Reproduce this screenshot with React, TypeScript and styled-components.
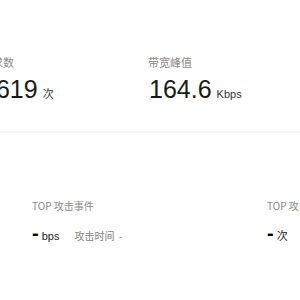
import React from 'react'
import styled, {createGlobalStyle} from 'styled-components'

const GlobalStyle = createGlobalStyle`
    body {
        margin: 0;
        background: #fefefe;
        font-family: 'Liberation Sans', 'Noto Sans CJK SC', sans-serif;
        overflow: hidden;
    }
`

const Page = styled.div`
    width: 300px;
    height: 300px;
    overflow: hidden;
`

const Summary = styled.section`
    display: flex;
    height: 133px;
    box-sizing: border-box;
    padding-top: 55px;
    margin-left: -19px;
    background: #fff;
    border-bottom: 2px solid #f2f3f6;
`

const Stat = styled.div`
    width: 167px;
    flex-shrink: 0;
`

const Label = styled.div`
    font-family: 'Noto Sans CJK SC', 'Liberation Sans', sans-serif;
    font-size: 11px;
    line-height: 14px;
    color: #8a8a8a;
    white-space: nowrap;
`

const Value = styled.div`
    display: flex;
    align-items: baseline;
    margin-top: 8px;
    margin-left: 1px;
    white-space: nowrap;
`

const Big = styled.span`
    font-size: 25px;
    line-height: 25px;
    color: #1a1a1a;
`

const Unit = styled.span`
    margin-left: 5px;
    font-size: 11px;
    color: #333;
`

const Events = styled.section`
    display: flex;
    padding-top: 66px;
`

const EventCol = styled.div<{$width: number; $inset: number}>`
    width: ${p => p.$width}px;
    flex-shrink: 0;
    box-sizing: border-box;
    padding-left: ${p => p.$inset}px;
`

const EventLabel = styled.div`
    font-family: 'Noto Sans CJK SC', 'Liberation Sans', sans-serif;
    font-size: 10px;
    line-height: 13px;
    color: #888;
    white-space: nowrap;
`

const EventRow = styled.div`
    display: flex;
    align-items: baseline;
    margin-top: 11px;
    white-space: nowrap;
`

const Dash = styled.span`
    font-size: 20px;
    line-height: 20px;
    font-weight: bold;
    color: #000;
`

const SmallUnit = styled.span`
    margin-left: 3px;
    font-size: 11px;
    color: #222;
`

const Meta = styled.span`
    margin-left: 15px;
    font-family: 'Noto Sans CJK SC', sans-serif;
    font-size: 10px;
    color: #7f7f7f;
`

export default function App() {
    return (
        <Page>
            <GlobalStyle />
            <Summary>
                <Stat>
                    <Label>请求数</Label>
                    <Value>
                        <Big>1619</Big>
                        <Unit>次</Unit>
                    </Value>
                </Stat>
                <Stat>
                    <Label>带宽峰值</Label>
                    <Value>
                        <Big>164.6</Big>
                        <Unit>Kbps</Unit>
                    </Value>
                </Stat>
            </Summary>
            <Events>
                <EventCol $width={267} $inset={32}>
                    <EventLabel>TOP 攻击事件</EventLabel>
                    <EventRow>
                        <Dash>-</Dash>
                        <SmallUnit>bps</SmallUnit>
                        <Meta>攻击时间&nbsp;&nbsp;-</Meta>
                    </EventRow>
                </EventCol>
                <EventCol $width={200} $inset={0}>
                    <EventLabel>TOP 攻击来源</EventLabel>
                    <EventRow>
                        <Dash>-</Dash>
                        <SmallUnit>次</SmallUnit>
                    </EventRow>
                </EventCol>
            </Events>
        </Page>
    )
}
